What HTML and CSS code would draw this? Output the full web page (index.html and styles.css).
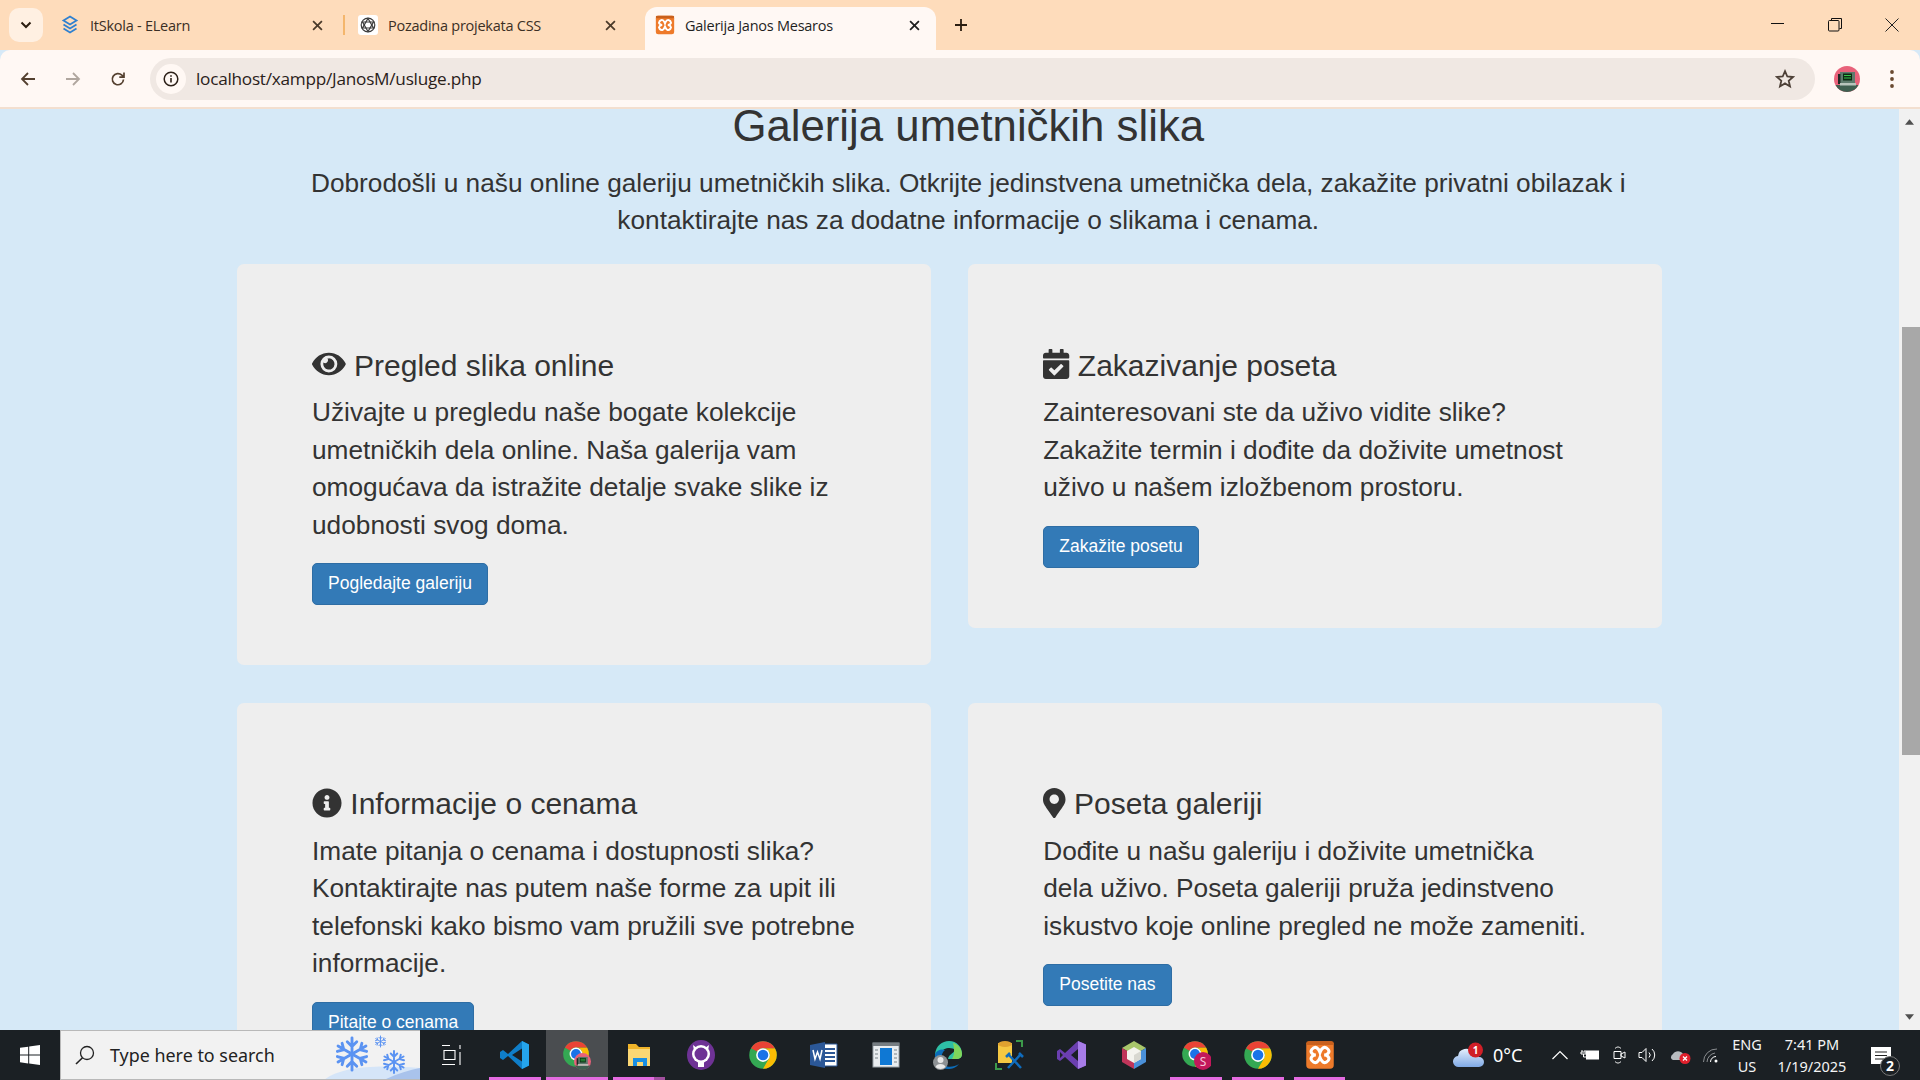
FILE: index.html
```html
<!DOCTYPE html>
<html lang="sr">
<head>
<meta charset="utf-8">
<title>Galerija Janos Mesaros</title>
<link rel="stylesheet" href="styles.css">
</head>
<body>
<svg class="defs" width="0" height="0" aria-hidden="true">
  <defs>
    <linearGradient id="cloudfill" x1="0" y1="0" x2="0" y2="1"><stop offset="0" stop-color="#e4effc"/><stop offset="1" stop-color="#7fa9e6"/></linearGradient>
  </defs>
  <symbol id="chrome" viewBox="0 0 48 48">
    <circle cx="24" cy="24" r="22" fill="#34a853"/>
    <path d="M43.05 13A22 22 0 0 1 24 46L33.53 29.5A11 11 0 0 0 24 13z" fill="#fbbc04"/>
    <path d="M24 2a22 22 0 0 1 19.05 11H24a11 11 0 0 0-9.53 5.5L4.95 13A22 22 0 0 1 24 2z" fill="#ea4335"/>
    <circle cx="24" cy="24" r="11" fill="#fff"/>
    <circle cx="24" cy="24" r="8.5" fill="#1a73e8"/>
  </symbol>
  <symbol id="xampp" viewBox="0 0 24 24">
    <rect x="1" y="1" width="22" height="22" rx="3" fill="#ee7a2a"/>
    <rect x="1" y="1" width="22" height="3" rx="1.500" fill="#c9601c"/>
    <path d="M5.500 7.500C8.500 4 11 7 12 10 13 7 15.500 4 18.500 7.500c2 2.500-1 4.500-3.200 4.500 2.200 0 5.200 2 3.200 4.500C15.500 20 13 17 12 14c-1 3-3.500 6-6.500 2.500C3.500 14 6.500 12 8.700 12c-2.200 0-5.200-2-3.200-4.500z" fill="none" stroke="#fff" stroke-width="2.400"/>
  </symbol>
  <symbol id="avatar" viewBox="0 0 26 26">
    <circle cx="13" cy="13" r="13" fill="#e8627a"/>
    <path d="M1.500 19h23a13 13 0 0 1-23 0z" fill="#3f5f50"/>
    <rect x="6" y="6" width="15" height="11" fill="#5d7a6c"/>
    <rect x="9" y="7.500" width="9" height="7" fill="#0b2a12"/>
    <path d="M10 9.500h7M10 12h7" stroke="#37c24a" stroke-width="1.200"/>
    <rect x="4" y="8" width="2.500" height="10" fill="#1e2a26"/>
    <rect x="6" y="17" width="16" height="2.500" fill="#b8c4bc"/>
  </symbol>
  <symbol id="flake" viewBox="0 0 40 40">
    <g fill="none" stroke="#5b93f2" stroke-width="3" stroke-linecap="round">
      <path d="M20 3v34M15 7l5 5 5-5M15 33l5-5 5 5"/>
      <path d="M5.300 11.500l29.400 17M4.600 17.300l6.800-1.800-1.800-6.800M35.400 22.700l-6.800 1.800 1.800 6.800"/>
      <path d="M34.700 11.500l-29.400 17M35.400 17.300l-6.800-1.800 1.800-6.800M4.600 22.700l6.800 1.800-1.800 6.800"/>
    </g>
  </symbol>
</svg>

<div class="app">
  <header class="tabstrip">
    <button class="tabsearch" type="button" aria-label="Pretraga kartica">
      <svg width="12" height="8" viewBox="0 0 12 8"><path d="M1.500 1.500L6 6l4.500-4.500" fill="none" stroke="#2b1d10" stroke-width="2"/></svg>
    </button>
    <div class="tab tab-first">
      <svg class="favicon" viewBox="0 0 20 20"><g fill="none" stroke="#2f80d0" stroke-width="1.800"><path d="M10 1.500l6.500 4L10 9.500l-6.500-4z"/><path d="M3.500 9.500l6.500 4 6.500-4"/><path d="M3.500 13.500l6.500 4 6.500-4"/></g></svg>
      <span class="tab-title">ItSkola - ELearn</span>
      <svg class="tab-x" viewBox="0 0 10 10"><path d="M1 1l8 8M9 1l-8 8" stroke="#4a3a2a" stroke-width="1.600"/></svg>
    </div>
    <span class="tab-sep"></span>
    <div class="tab tab-second">
      <svg class="favicon favicon-white" viewBox="0 0 20 20"><g fill="none" stroke="#3c3c3c" stroke-width="1.200"><circle cx="10" cy="10" r="6.800"/><path d="M10 3.500l5.500 9.500H4.500z"/><path d="M10 16.500L4.500 7h11z"/></g></svg>
      <span class="tab-title">Pozadina projekata CSS</span>
      <svg class="tab-x" viewBox="0 0 10 10"><path d="M1 1l8 8M9 1l-8 8" stroke="#4a3a2a" stroke-width="1.600"/></svg>
    </div>
    <div class="tab tab-active">
      <svg class="favicon"><use href="#xampp"/></svg>
      <span class="tab-title">Galerija Janos Mesaros</span>
      <svg class="tab-x" viewBox="0 0 10 10"><path d="M1 1l8 8M9 1l-8 8" stroke="#1f1f1f" stroke-width="1.600"/></svg>
    </div>
    <svg class="newtab" viewBox="0 0 14 14"><path d="M7 1v12M1 7h12" stroke="#2b1d10" stroke-width="1.800"/></svg>
    <div class="winctl">
      <svg viewBox="0 0 14 14"><path d="M0 5.500h13" stroke="#111" stroke-width="1"/></svg>
      <svg viewBox="0 0 14 14"><path d="M3.500 2.500V.5h10v10h-2" fill="none" stroke="#111"/><rect x=".5" y="2.500" width="10.500" height="10.500" rx="1" fill="none" stroke="#111"/></svg>
      <svg viewBox="0 0 14 14"><path d="M.5.500l13 13M13.500.500l-13 13" stroke="#222" stroke-width="1"/></svg>
    </div>
  </header>

  <nav class="toolbar">
    <svg class="nav-ic" viewBox="0 0 16 16"><path d="M15 8H2M8 2L2 8l6 6" fill="none" stroke="#54402f" stroke-width="1.800"/></svg>
    <svg class="nav-ic" viewBox="0 0 16 16"><path d="M1 8h13M8 2l6 6-6 6" fill="none" stroke="#b0a69e" stroke-width="1.800"/></svg>
    <svg class="nav-ic" viewBox="0 0 16 16"><path d="M13.500 8.500a5.600 5.600 0 1 1-1.600-4.300L14 6.200M14 1.500v4.700H9.300" fill="none" stroke="#54402f" stroke-width="1.700"/></svg>
    <div class="omnibox">
      <span class="site-info"><svg viewBox="0 0 16 16" width="16" height="16"><circle cx="8" cy="8" r="6.800" fill="none" stroke="#2c2018" stroke-width="1.500"/><path d="M8 7v4.500M8 4.200v1.600" stroke="#2c2018" stroke-width="1.600"/></svg></span>
      <span class="url">localhost/xampp/JanosM/usluge.php</span>
      <svg class="star" viewBox="0 0 20 20"><path d="M10 2.200l2.300 5.300 5.700.5-4.300 3.800 1.300 5.600L10 14.400l-5 3 1.300-5.600L2 8l5.700-.5z" fill="none" stroke="#4d4037" stroke-width="1.800"/></svg>
    </div>
    <svg class="avatar"><use href="#avatar"/></svg>
    <svg class="menu" viewBox="0 0 4 18"><g fill="#6a4a30"><circle cx="2" cy="2" r="1.900"/><circle cx="2" cy="9" r="1.900"/><circle cx="2" cy="16" r="1.900"/></g></svg>
  </nav>

  <div class="viewport">
    <main class="page">
      <div class="head">
        <h1 class="title">Galerija umetničkih slika</h1>
        <p class="intro">Dobrodošli u našu online galeriju umetničkih slika. Otkrijte jedinstvena umetnička dela, zakažite privatni obilazak i kontaktirajte nas za dodatne informacije o slikama i cenama.</p>
      </div>
      <div class="cards">
        <section class="card">
          <h3><svg class="fa fa-eye" viewBox="0 0 576 512"><path d="M572.52 241.4C518.29 135.59 410.93 64 288 64S57.68 135.64 3.48 241.41a32.35 32.35 0 0 0 0 29.19C57.71 376.41 165.07 448 288 448s230.32-71.64 284.52-177.41a32.35 32.35 0 0 0 0-29.19zM288 400a144 144 0 1 1 144-144 143.93 143.93 0 0 1-144 144zm0-240a95.31 95.31 0 0 0-25.31 3.79 47.85 47.85 0 0 1-66.9 66.9A95.78 95.78 0 1 0 288 160z"/></svg> Pregled slika online</h3>
          <p>Uživajte u pregledu naše bogate kolekcije umetničkih dela online. Naša galerija vam omogućava da istražite detalje svake slike iz udobnosti svog doma.</p>
          <a class="btn" href="#">Pogledajte galeriju</a>
        </section>
        <section class="card">
          <h3><svg class="fa fa-cal" viewBox="0 0 448 512"><path d="M436 160H12c-6.627 0-12-5.373-12-12v-36c0-26.51 21.49-48 48-48h48V12c0-6.627 5.373-12 12-12h40c6.627 0 12 5.373 12 12v52h128V12c0-6.627 5.373-12 12-12h40c6.627 0 12 5.373 12 12v52h48c26.51 0 48 21.49 48 48v36c0 6.627-5.373 12-12 12zM12 192h424c6.627 0 12 5.373 12 12v260c0 26.51-21.49 48-48 48H48c-26.51 0-48-21.49-48-48V204c0-6.627 5.373-12 12-12zm333.296 95.947l-28.169-28.398c-4.667-4.705-12.265-4.736-16.97-.068L194.12 364.665l-45.98-46.352c-4.667-4.705-12.266-4.736-16.971-.068l-28.397 28.17c-4.705 4.667-4.736 12.265-.068 16.97l82.601 83.269c4.667 4.705 12.265 4.736 16.97.068l142.953-141.805c4.705-4.667 4.736-12.265.068-16.97z"/></svg> Zakazivanje poseta</h3>
          <p>Zainteresovani ste da uživo vidite slike? Zakažite termin i dođite da doživite umetnost uživo u našem izložbenom prostoru.</p>
          <a class="btn" href="#">Zakažite posetu</a>
        </section>
        <section class="card">
          <h3><svg class="fa fa-info" viewBox="0 0 512 512"><path d="M256 8C119.043 8 8 119.083 8 256c0 136.997 111.043 248 248 248s248-111.003 248-248C504 119.083 392.957 8 256 8zm0 110c23.196 0 42 18.804 42 42s-18.804 42-42 42-42-18.804-42-42 18.804-42 42-42zm56 254c0 6.627-5.373 12-12 12h-88c-6.627 0-12-5.373-12-12v-24c0-6.627 5.373-12 12-12h12v-64h-12c-6.627 0-12-5.373-12-12v-24c0-6.627 5.373-12 12-12h64c6.627 0 12 5.373 12 12v100h12c6.627 0 12 5.373 12 12v24z"/></svg> Informacije o cenama</h3>
          <p>Imate pitanja o cenama i dostupnosti slika? Kontaktirajte nas putem naše forme za upit ili telefonski kako bismo vam pružili sve potrebne informacije.</p>
          <a class="btn" href="#">Pitajte o cenama</a>
        </section>
        <section class="card">
          <h3><svg class="fa fa-pin" viewBox="0 0 384 512"><path d="M172.268 501.67C26.97 291.031 0 269.413 0 192 0 85.961 85.961 0 192 0s192 85.961 192 192c0 77.413-26.97 99.031-172.268 309.67-9.535 13.774-29.93 13.773-39.464 0zM192 272c44.183 0 80-35.817 80-80s-35.817-80-80-80-80 35.817-80 80 35.817 80 80 80z"/></svg> Poseta galeriji</h3>
          <p>Dođite u našu galeriju i doživite umetnička dela uživo. Poseta galeriji pruža jedinstveno iskustvo koje online pregled ne može zameniti.</p>
          <a class="btn" href="#">Posetite nas</a>
        </section>
      </div>
    </main>
    <div class="scrollbar">
      <svg class="sb-arrow" viewBox="0 0 10 6"><path d="M5 0l5 6H0z" fill="#505050"/></svg>
      <div class="sb-track"><div class="sb-thumb"></div></div>
      <svg class="sb-arrow" viewBox="0 0 10 6"><path d="M5 6L0 0h10z" fill="#505050"/></svg>
    </div>
  </div>

  <footer class="taskbar">
    <div class="start">
      <svg viewBox="0 0 20 20" width="20" height="20"><path d="M0 2.800l8.200-1.100v7.900H0zM9.200 1.500L20 0v9.600H9.200zM0 10.500h8.200v7.900L0 17.200zM9.200 10.500H20V20L9.200 18.500z" fill="#fff"/></svg>
    </div>
    <div class="search">
      <svg class="search-ic" viewBox="0 0 20 20"><circle cx="12" cy="8" r="6.500" fill="none" stroke="#222" stroke-width="1.300"/><path d="M7.500 12.700L1 19" stroke="#222" stroke-width="1.600"/></svg>
      <span class="search-text">Type here to search</span>
      <svg class="search-art" viewBox="0 0 96 50">
        <path d="M0 50C15 38 45 34 96 38v12z" fill="#d5e5f8"/>
        <path d="M60 50C72 44 85 40 96 38v12z" fill="#a9c3ec"/>
        <use href="#flake" x="9" y="5" width="38" height="38"/>
        <use href="#flake" x="57" y="19" width="26" height="26"/>
        <use href="#flake" x="50" y="5" width="13" height="13"/>
      </svg>
    </div>
    <div class="taskview">
      <svg viewBox="0 0 20 20" width="20" height="20"><path d="M0 .5h8M0 19.500h13M2 5.500h11v9H2zM18 0v4M18 7v13" fill="none" stroke="#fff" stroke-width="1.100"/></svg>
    </div>
    <div class="apps">
      <div class="app-tile run"><svg viewBox="0 0 30 30"><path d="M22 1l7 3.500v21L22 29 8 16l-5 4-3-2v-6l3-2 5 4z" fill="#0f7ec9"/><path d="M22 1l7 3.500v21L22 29z" fill="#25a4ec"/><path d="M22 8.500L12 15l10 6.500z" fill="#1b2024"/></svg></div>
      <div class="app-tile run active"><svg viewBox="0 0 30 30"><use href="#chrome" width="28" height="28" x="0" y="0"/><use href="#avatar" x="12" y="13" width="17" height="17"/></svg></div>
      <div class="app-tile run split"><svg viewBox="0 0 30 30"><path d="M4 4h8l3 3h11v19H4z" fill="#f0b429"/><path d="M4 9h22v17H4z" fill="#fbd774"/><path d="M9 26v-8h14v8h-4v-4h-6v4z" fill="#1a8fe3"/></svg></div>
      <div class="app-tile"><svg viewBox="0 0 30 30"><ellipse cx="15" cy="15" rx="14" ry="15" fill="#6e3295"/><circle cx="15" cy="14" r="9" fill="#fff"/><circle cx="15" cy="14" r="6.500" fill="#6e3295"/><path d="M7 5l4 3-3 3zM23 5l-4 3 3 3zM12 22h6v5h-6z" fill="#fff"/></svg></div>
      <div class="app-tile"><svg><use href="#chrome"/></svg></div>
      <div class="app-tile"><svg viewBox="0 0 30 30"><path d="M13 4h15v22H13z" fill="#fff" stroke="#2b5797"/><path d="M16 9h10M16 13h10M16 17h10M16 21h10" stroke="#2b5797" stroke-width="2"/><path d="M1 5l15-3v26L1 25z" fill="#2b5797"/><path d="M4 10l2 9 2.500-7 2.500 7 2-9" fill="none" stroke="#fff" stroke-width="1.500"/></svg></div>
      <div class="app-tile"><svg viewBox="0 0 30 30"><rect x="2" y="3" width="26" height="24" fill="#e9edf0" stroke="#9aa2a8"/><rect x="2" y="3" width="26" height="3" fill="#767d82"/><rect x="9" y="8" width="12" height="17" fill="#0f78d4"/><path d="M4 10h3M4 14h3M4 18h3M23 10h3M23 14h3M23 18h3M23 22h3" stroke="#7b8388" stroke-width="1.200"/></svg></div>
      <div class="app-tile"><svg viewBox="0 0 30 30"><path d="M2 14C3 6 9 1 16 1c8 0 13 6 13 13 0 3-2 5-6 5h-8c1-5 5-5 7-9-3-3-12-3-15 4z" fill="#2ebfa5"/><path d="M20 3c5 1 9 6 9 11 0 3-2 5-6 5h-4c2-3 3-8 1-16z" fill="#7fd65b"/><path d="M2 14c3-5 7-5 10-4-4 3-5 10-1 15 4 3 10 2 15-1-3 4-7 5-11 5C7 29 1 22 2 14z" fill="#0c6cb8"/><circle cx="7.500" cy="22.500" r="7.500" fill="#8d9194"/><circle cx="7.500" cy="20" r="3" fill="#e8e8e8"/><path d="M2.500 27c1-4 9-4 10 0a7 7 0 0 1-10 0z" fill="#e8e8e8"/></svg></div>
      <div class="app-tile"><svg viewBox="0 0 30 30"><path d="M3 3h14v20H3z" fill="#f5c842"/><ellipse cx="10" cy="4" rx="7" ry="3" fill="#e0a230"/><path d="M21 1h6v6M7 29H1v-6" fill="none" stroke="#3c9a4a" stroke-width="2"/><path d="M13 28l13-14M26 28L13 14M11 17l4-4M24 13l4 4" stroke="#0f6cbd" stroke-width="2.500" fill="none"/></svg></div>
      <div class="app-tile"><svg viewBox="0 0 30 30"><path d="M21 1l8 3.500v21L21 29 8 17l-5 4-3-2V11l3-2 5 4z" fill="#6b3fb0"/><path d="M21 1l8 3.500v21L21 29z" fill="#a77ce8"/><path d="M21 9l-7 6 7 6zM3 12v6l3-3z" fill="#1b2024"/></svg></div>
      <div class="app-tile"><svg viewBox="0 0 30 30"><path d="M15 1l12 7-12 7L3 8z" fill="#a9c76b"/><path d="M3 8l12 7v14L3 22z" fill="#c0355a"/><path d="M27 8L15 15v14l12-7z" fill="#4a90d9"/><path d="M15 7l7 4v8l-7 4-7-4v-8z" fill="#f4f4ee"/><path d="M15 15l7-4v8l-7 4z" fill="#d8d8d0"/></svg></div>
      <div class="app-tile run"><svg viewBox="0 0 30 30"><use href="#chrome" width="28" height="28" x="0" y="0"/><circle cx="22" cy="21" r="9" fill="#c2185b"/><text class="badge-s" x="22" y="25.500" text-anchor="middle">S</text></svg></div>
      <div class="app-tile run"><svg><use href="#chrome"/></svg></div>
      <div class="app-tile run"><svg><use href="#xampp"/></svg></div>
    </div>
    <div class="tray">
      <div class="weather">
        <svg class="cloud" viewBox="0 0 32 26"><path d="M6 25a5.500 5.500 0 0 1-1-11 8 8 0 0 1 15-3 6 6 0 0 1 6 4 5 5 0 0 1 0 10z" fill="url(#cloudfill)"/><circle cx="22.500" cy="8" r="7.500" fill="#d01f27"/><text class="badge-1" x="22.500" y="12" text-anchor="middle">1</text></svg>
        <span class="temp">0°C</span>
      </div>
      <div class="tray-icons">
        <svg width="16" height="10" viewBox="0 0 16 10"><path d="M.5 9L8 1.500 15.500 9" fill="none" stroke="#fff" stroke-width="1.200"/></svg>
        <svg width="20" height="14" viewBox="0 0 20 14"><path d="M2 2v2M5 2v2M1 4h5v2H1zM3.500 6v3H6" fill="none" stroke="#fff"/><rect x="6" y="2.500" width="13" height="9" fill="#fff"/></svg>
        <svg width="15" height="18" viewBox="0 0 15 18"><path d="M2 5.500h7v7H2zM9 8l4-2v6l-4-2zM3 2.500C5 .5 7 .5 9 2.500M3 15.500c2 2 4 2 6 0" fill="none" stroke="#fff"/></svg>
        <svg width="20" height="16" viewBox="0 0 20 16"><path d="M1 5.500h3l4-4v13l-4-4H1zM11 5.500a3.500 3.500 0 0 1 0 5M14 2a8 8 0 0 1 0 12" fill="none" stroke="#fff"/></svg>
        <svg width="21" height="17" viewBox="0 0 21 17"><path d="M1 11a4 4 0 0 1 2-4 6 6 0 0 1 10 0 4 4 0 0 1 0 6H3a3 3 0 0 1-2-2z" fill="#b8bcc0"/><circle cx="15" cy="11.500" r="5.500" fill="#e0202c"/><path d="M13 9.500l4 4M17 9.500l-4 4" stroke="#fff" stroke-width="1.300"/></svg>
        <svg width="16" height="15" viewBox="0 0 16 15"><path d="M.5 14A13 13 0 0 1 14 1M4 14A9.500 9.500 0 0 1 12 5" fill="none" stroke="#8a8d90"/><path d="M7.500 14A5.500 5.500 0 0 1 13 8.500" fill="none" stroke="#fff"/><circle cx="13" cy="13" r="1.500" fill="#fff"/></svg>
      </div>
      <div class="tray-text lang"><span>ENG</span><span>US</span></div>
      <div class="tray-text clock"><span>7:41 PM</span><span>1/19/2025</span></div>
      <div class="notif">
        <svg width="32" height="32" viewBox="0 0 32 32"><path d="M2 3h20v17H2z" fill="#fff"/><path d="M6 8h12M6 11.500h12M6 15h9" stroke="#222" stroke-width="1.200"/><circle cx="21" cy="22" r="9.500" fill="#1b2024" stroke="#777"/><text class="badge-2" x="21" y="27" text-anchor="middle">2</text></svg>
      </div>
    </div>
  </footer>
</div>
</body>
</html>
```

FILE: styles.css
```css
* { box-sizing: border-box; }
html, body { margin: 0; height: 100%; overflow: hidden; }
body { font-family: "Liberation Sans", Arial, sans-serif; color: #333; background: #d6e9f7; }
.defs { position: absolute; }
.app { height: 100vh; display: flex; flex-direction: column; }

/* tab strip */
.tabstrip { height: 50px; flex: none; background: #fedcbb; display: flex; align-items: flex-end; position: relative; font-family: "Open Sans", "Noto Sans", sans-serif; font-size: 14.500px; color: #3b2f25; }
.tabsearch { width: 34px; height: 34px; margin: 0 0 8px 9px; border: 0; border-radius: 10px; background: #fff0e2; display: flex; align-items: center; justify-content: center; padding: 0; }
.tab { height: 43px; padding-bottom: 7px; display: flex; align-items: center; }
.tab-first { width: 283px; margin-left: 17px; }
.tab-sep { width: 2px; height: 20px; margin: 0 13px 15px 0; background: #f4b66c; }
.tab-second { width: 272px; }
.tab-active { width: 291px; margin-left: 15px; padding-left: 10px; background: #fff8f4; border-radius: 12px 12px 0 0; color: #1f1f1f; }
.favicon { width: 20px; height: 20px; flex: none; margin-right: 10px; }
.favicon-white { background: #fff; border-radius: 3px; }
.tab-title { flex: 1; white-space: nowrap; letter-spacing: -.25px; }
.tab-x { width: 11px; height: 11px; flex: none; margin-right: 16px; }
.tab-first .tab-x { margin-right: 20px; }
.tab-second .tab-x { margin-right: 14px; }
.newtab { width: 14px; height: 14px; margin: 0 0 18px 18px; }
.winctl { margin-left: auto; align-self: flex-start; display: flex; gap: 43px; padding: 18px 21px 0 0; }
.winctl svg { width: 14px; height: 14px; }

/* toolbar */
.toolbar { height: 59px; flex: none; background: #fff8f4; border-bottom: 2px solid #f3dfcf; border-radius: 10px 10px 0 0; display: flex; align-items: center; padding: 0 0 0 20px; }
.nav-ic { width: 16px; height: 16px; flex: none; margin-right: 29px; }
.omnibox { width: 1665px; height: 42px; margin-left: -5px; background: #f0e8e3; border-radius: 21px; display: flex; align-items: center; padding: 0 20px 0 6px; }
.site-info { width: 30px; height: 30px; border-radius: 50%; background: #fff8f4; display: flex; align-items: center; justify-content: center; }
.url { margin-left: 10px; flex: 1; font-family: "Open Sans", "Noto Sans", sans-serif; font-size: 17.200px; color: #2a211a; letter-spacing: -.25px; }
.star { width: 20px; height: 20px; }
.avatar { width: 26px; height: 26px; flex: none; margin-left: 19px; }
.menu { width: 4px; height: 18px; flex: none; margin-left: 30px; }

/* page */
.viewport { flex: 1; min-height: 0; display: flex; overflow: hidden; }
.page { flex: 1; min-width: 0; padding: 1px 237px 0; }
.head { margin-right: -37.500px; text-align: center; }
.title { margin: 0; font-size: 43.750px; line-height: 32px; font-weight: 400; color: #333; }
.intro { margin: 22.500px 0 0; font-size: 26.250px; line-height: 37.500px; }
.cards { margin-top: 24.500px; display: grid; grid-template-columns: 1fr 1fr; column-gap: 37.500px; row-gap: 37.500px; align-items: start; }
.card { background: #eee; border-radius: 7px; padding: 84.500px 75px 60px; }
.card h3 { margin: 0 0 12.500px; font-size: 30px; line-height: 33px; font-weight: 400; white-space: nowrap; }
.card p { margin: 0 0 19px; font-size: 26.250px; line-height: 37.500px; }
.fa { height: 30px; vertical-align: -3.750px; fill: #333; }
.fa-eye { width: 33.750px; }
.fa-cal { width: 26.250px; }
.fa-info { width: 30px; }
.fa-pin { width: 22.500px; }
.btn { display: inline-block; height: 42px; padding: 0 15px; border: 1px solid #2e6da4; border-radius: 5px; background: #337ab7; color: #fff; font-size: 17.500px; line-height: 38px; text-decoration: none; }

/* scrollbar */
.scrollbar { width: 21px; flex: none; background: #f1f1f1; display: flex; flex-direction: column; align-items: center; }
.sb-arrow { width: 9px; height: 6px; margin: 10px 0; flex: none; }
.sb-track { flex: 1; width: 100%; padding-top: 192px; }
.sb-thumb { width: 18px; height: 428px; margin-left: 3px; background: #a8a8a8; }

/* taskbar */
.taskbar { height: 50px; flex: none; background: #1b2024; display: flex; color: #fff; font-family: "Noto Sans", "Open Sans", sans-serif; }
.start { width: 60px; display: flex; align-items: center; justify-content: center; }
.search { width: 360px; height: 50px; background: #f2f2f2; border: 1px solid #b9b9b9; border-width: 1px 0 1px 1px; display: flex; align-items: center; color: #222; overflow: hidden; }
.search-ic { width: 20px; height: 20px; margin-left: 14px; flex: none; }
.search-text { margin-left: 15px; font-size: 17.900px; flex: 1; white-space: nowrap; }
.search-art { width: 96px; height: 50px; flex: none; }
.taskview { width: 64px; display: flex; align-items: center; justify-content: center; }
.apps { display: flex; }
.app-tile { width: 61.900px; height: 50px; position: relative; display: flex; align-items: center; justify-content: center; }
.app-tile svg { width: 30px; height: 30px; }
.app-tile.run::after { content: ""; position: absolute; left: 5px; right: 5px; bottom: 0; height: 3px; background: #e46be0; }
.app-tile.active { background: #4a4d50; }
.app-tile.active::after { left: 0; right: 0; }
.app-tile.split::after { background: linear-gradient(90deg, #e46be0 78%, #a2509f 78%); }
.badge-s { font-size: 12px; fill: #f6c6da; font-family: "Noto Sans", sans-serif; }
.tray { margin-left: auto; display: flex; align-items: center; }
.weather { display: flex; align-items: center; }
.cloud { width: 32px; height: 26px; }
.temp { margin-left: 8px; font-size: 18px; width: 59px; }
.badge-1 { font-size: 10px; font-weight: 700; fill: #fff; font-family: "Noto Sans", sans-serif; }
.badge-2 { font-size: 14px; font-weight: 700; fill: #fff; font-family: "Noto Sans", sans-serif; }
.tray-icons { display: flex; align-items: center; width: 172px; justify-content: space-between; padding-right: 5px; }
.tray-text { display: flex; flex-direction: column; align-items: center; justify-content: center; gap: 3px; font-size: 14.500px; line-height: 19px; color: #f4f4f4; }
.lang { margin-left: 5px; width: 36px; }
.clock { margin-left: 7px; width: 80px; }
.notif { margin-left: 17px; margin-right: 19px; height: 50px; padding-top: 14px; }
.notif svg { display: block; }
```
